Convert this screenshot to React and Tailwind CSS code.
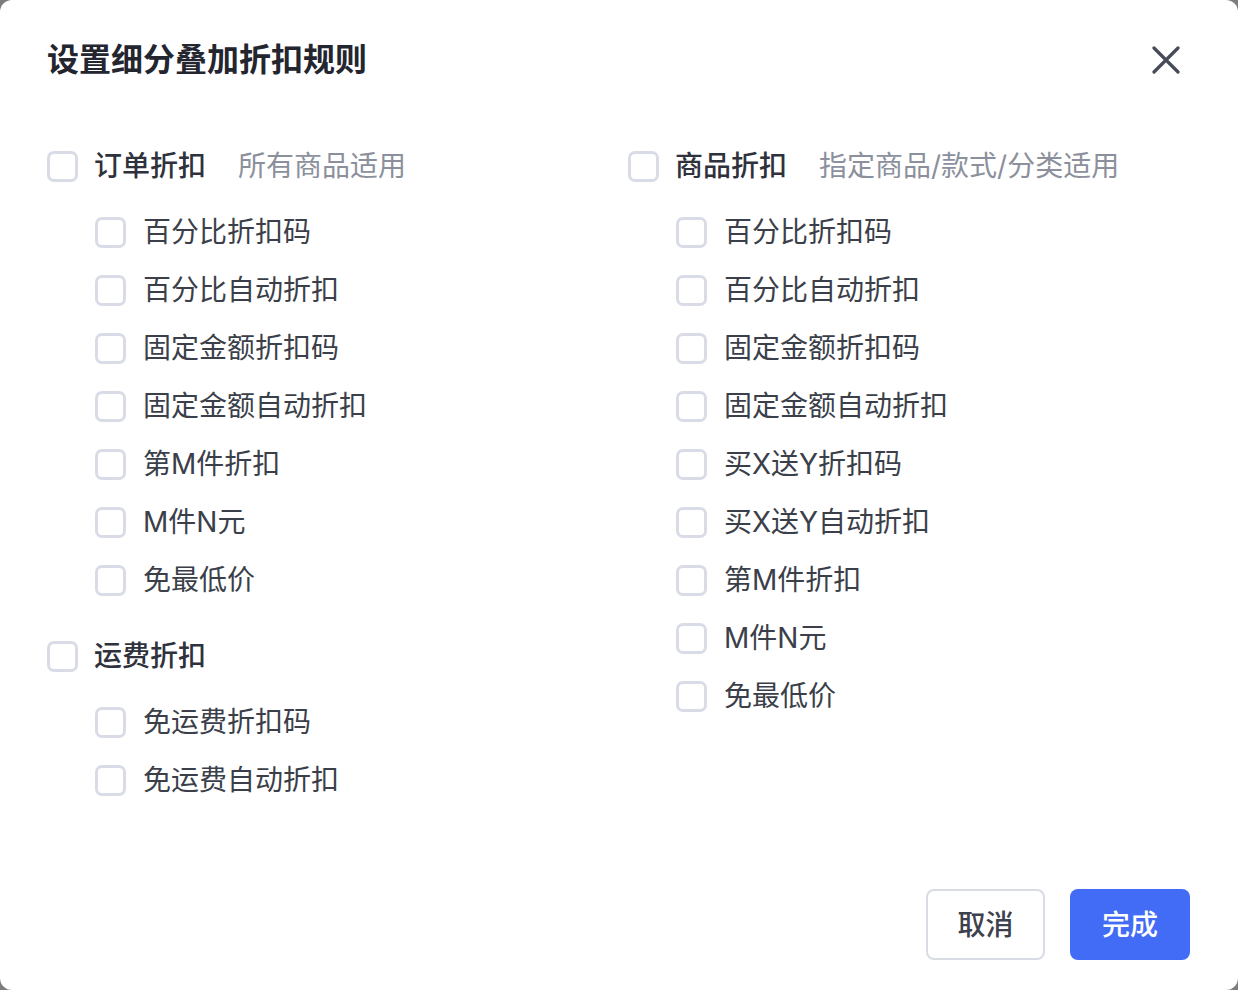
import React from "react";

const FONT = { fontFamily: "Inter, 'Noto Sans CJK SC', sans-serif" };

const orderItems = [
  "百分比折扣码",
  "百分比自动折扣",
  "固定金额折扣码",
  "固定金额自动折扣",
  "第M件折扣",
  "M件N元",
  "免最低价",
];

const shippingItems = ["免运费折扣码", "免运费自动折扣"];

const productItems = [
  "百分比折扣码",
  "百分比自动折扣",
  "固定金额折扣码",
  "固定金额自动折扣",
  "买X送Y折扣码",
  "买X送Y自动折扣",
  "第M件折扣",
  "M件N元",
  "免最低价",
];

const Box = () => (
  <span className="w-[31px] h-[31px] shrink-0 rounded-[7px] border-[3px] border-[#d9dbe6] bg-white" />
);

const GroupHeader = ({ title, hint }) => (
  <div className="flex items-center h-[58px]">
    <Box />
    <span className="ml-[16px] text-[28px] font-medium text-[#2f323c]">{title}</span>
    {hint && <span className="ml-[32px] text-[28px] text-[#8b909c]">{hint}</span>}
  </div>
);

const Item = ({ label }) => (
  <div className="flex items-center h-[58px]">
    <Box />
    <span className="ml-[17px] text-[28px] text-[#3b3f4a]">{label}</span>
  </div>
);

const ItemList = ({ items }) => (
  <div className="mt-[8px] pl-[48px]">
    {items.map((it) => (
      <Item key={it} label={it} />
    ))}
  </div>
);

export default function App() {
  return (
    <div className="w-[1238px] h-[990px] bg-[#7d7d7d]" style={FONT}>
      <div className="w-full h-full bg-white rounded-[12px] flex flex-col">
        {/* Header */}
        <div className="flex items-center justify-between h-[40px] mt-[40px] pl-[47px] pr-[58px]">
          <h1 className="text-[32px] font-bold text-[#23262f]">设置细分叠加折扣规则</h1>
          <svg width="28" height="28" viewBox="0 0 28 28" fill="none">
            <path d="M2 2L26 26M26 2L2 26" stroke="#464b58" strokeWidth="3.2" strokeLinecap="round" />
          </svg>
        </div>

        {/* Body */}
        <div className="flex mt-[57px] pl-[47px]">
          <div className="w-[581px]">
            <GroupHeader title="订单折扣" hint="所有商品适用" />
            <ItemList items={orderItems} />
            <div className="mt-[18px]">
              <GroupHeader title="运费折扣" />
              <ItemList items={shippingItems} />
            </div>
          </div>
          <div className="flex-1">
            <GroupHeader title="商品折扣" hint="指定商品/款式/分类适用" />
            <ItemList items={productItems} />
          </div>
        </div>

        {/* Footer */}
        <div className="mt-auto flex justify-end gap-[25px] pr-[48px] pb-[30px]">
          <button className="w-[119px] h-[71px] rounded-[8px] border-2 border-[#d9dbe5] bg-white text-[28px] font-medium text-[#3d414d]">
            取消
          </button>
          <button className="w-[120px] h-[71px] rounded-[8px] bg-[#436cf6] text-[28px] font-medium text-white">
            完成
          </button>
        </div>
      </div>
    </div>
  );
}
